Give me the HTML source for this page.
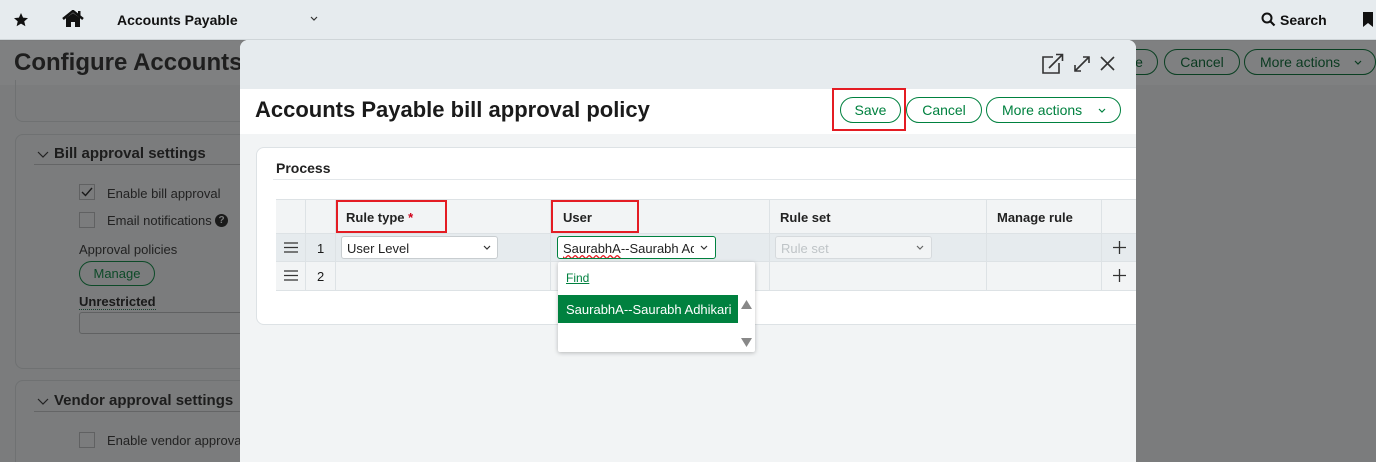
<!DOCTYPE html>
<html><head><meta charset="utf-8"><style>
*{box-sizing:border-box;margin:0;padding:0}
html,body{width:1376px;height:462px;overflow:hidden;background-color:rgb(123,124,125)}
body{position:relative;font-family:"Liberation Sans",sans-serif;color:#1a1a1a}
.abs{position:absolute}
.top{left:0;top:0;width:1376px;height:40px;background:#e6ebee;border-bottom:1px solid #cfd5d8}
.btn{position:absolute;height:26px;border:1.5px solid #00813f;border-radius:14px;color:#00813f;font-size:14px;display:flex;align-items:center;justify-content:center;background:#fff;white-space:nowrap}
.dbtn{position:absolute;height:26px;border:1.5px solid #0a3f22;border-radius:14px;color:#0a3a20;font-size:14px;display:flex;align-items:center;justify-content:center;white-space:nowrap}
.red{position:absolute;border:2px solid #e41c23}
.sel{position:absolute;height:23px;background:#fff;border:1px solid #c8cdd0;border-radius:3px;font-size:13px;padding:4px 5px;color:#222;white-space:nowrap}
.dk{color:#1d1d1d}
.chev{position:absolute}
</style></head><body>
<svg class="abs" style="left:0;top:0" width="1376" height="462"><rect x="0" y="0" width="1376" height="462" fill="#7b7c7d"/><rect x="0" y="41" width="1376" height="44" fill="#7f8081"/></svg>
<!-- top bar -->
<div class="abs top">
 <svg class="abs" style="left:13px;top:12px" width="16" height="16" viewBox="0 0 24 24"><path d="M12 1.5l3.1 7 7.4.6-5.6 4.9 1.7 7.3L12 17.4l-6.6 3.9 1.7-7.3L1.5 9.1l7.4-.6z" fill="#111"/></svg>
 <svg class="abs" style="left:62px;top:10px" width="22" height="18" viewBox="0 0 22 18"><path d="M1 9L11 1l10 8" stroke="#111" stroke-width="2.5" fill="none"/><path d="M4 8v9h5v-5h4v5h5V8L11 3z" fill="#111"/><rect x="16" y="1" width="2.5" height="5" fill="#111"/></svg>
 <div class="abs" style="left:117px;top:12px;font-size:14px;font-weight:bold;color:#111">Accounts Payable</div>
 <svg class="chev" style="left:310px;top:16px" width="8" height="5" viewBox="0 0 8 5"><path d="M1 1l3 3 3-3" stroke="#333" stroke-width="1.2" fill="none"/></svg>
 <svg class="abs" style="left:1261px;top:12px" width="15" height="15" viewBox="0 0 15 15"><circle cx="6" cy="6" r="4.5" stroke="#111" stroke-width="2" fill="none"/><path d="M9.5 9.5l4 4" stroke="#111" stroke-width="2.2"/></svg>
 <div class="abs" style="left:1280px;top:12px;font-size:14px;font-weight:bold;color:#111">Search</div>
 <svg class="abs" style="left:1363px;top:12px" width="10" height="15" viewBox="0 0 10 15"><path d="M0 0h10v15L5 11 0 15z" fill="#111"/></svg>
</div>
<div class="abs dk" style="left:14px;top:49px;font-size:24px;font-weight:bold;color:#1e1e1e;white-space:nowrap">Configure Accounts P</div>
<div class="dbtn" style="left:1120px;top:49px;width:38px">e</div>
<div class="dbtn" style="left:1164px;top:49px;width:76px">Cancel</div>
<div class="dbtn" style="left:1244px;top:49px;width:132px;justify-content:flex-start;padding-left:15px">More actions</div>
<svg class="chev" style="left:1354px;top:60px" width="8" height="5" viewBox="0 0 8 5"><path d="M1 1l3 3 3-3" stroke="#0a3a20" stroke-width="1.2" fill="none"/></svg>
<div class="abs" style="left:15px;top:80px;width:240px;height:42px;border:1px solid #6f7172;border-top:none;border-radius:0 0 8px 8px"></div>
<div class="abs" style="left:15px;top:134px;width:240px;height:235px;border:1px solid #6f7172;border-radius:8px"></div>
<svg class="chev" style="left:37px;top:151px" width="12" height="7" viewBox="0 0 12 7"><path d="M1 1l5 5 5-5" stroke="#222" stroke-width="1.2" fill="none"/></svg>
<div class="abs dk" style="left:54px;top:145px;font-size:15px;font-weight:bold">Bill approval settings</div>
<div class="abs" style="left:34px;top:164px;width:206px;height:1px;background:#646566"></div>
<div class="abs" style="left:79px;top:184px;width:16px;height:16px;border:1px solid #606162"></div>
<svg class="abs" style="left:81px;top:187px" width="12" height="10" viewBox="0 0 12 10"><path d="M1 5l3.5 3.5L11 1" stroke="#1a1a1a" stroke-width="1.4" fill="none"/></svg>
<div class="abs" style="left:107px;top:186px;font-size:13px;color:#222">Enable bill approval</div>
<div class="abs" style="left:79px;top:212px;width:16px;height:16px;border:1px solid #606162"></div>
<div class="abs" style="left:107px;top:213px;font-size:13px;color:#222">Email notifications</div>
<div class="abs" style="left:215px;top:214px;width:13px;height:13px;border-radius:50%;background:#1a1a1a;color:#7b7c7d;font-size:10px;font-weight:bold;text-align:center;line-height:13px">?</div>
<div class="abs" style="left:79px;top:242px;font-size:13px;color:#222">Approval policies</div>
<div class="dbtn" style="left:79px;top:261px;width:76px;height:25px;border-color:#0d4a28;font-size:13px;color:#0d4a28">Manage</div>
<div class="abs" style="left:79px;top:294px;font-size:13px;font-weight:bold;color:#1a1a1a;border-bottom:1px dotted #1a4030">Unrestricted</div>
<div class="abs" style="left:79px;top:312px;width:170px;height:22px;border:1px solid #606162;border-radius:3px"></div>
<div class="abs" style="left:15px;top:380px;width:240px;height:90px;border:1px solid #6f7172;border-radius:8px"></div>
<svg class="chev" style="left:37px;top:398px" width="12" height="7" viewBox="0 0 12 7"><path d="M1 1l5 5 5-5" stroke="#222" stroke-width="1.2" fill="none"/></svg>
<div class="abs dk" style="left:54px;top:392px;font-size:15px;font-weight:bold">Vendor approval settings</div>
<div class="abs" style="left:34px;top:411px;width:206px;height:1px;background:#646566"></div>
<div class="abs" style="left:79px;top:432px;width:16px;height:16px;border:1px solid #606162"></div>
<div class="abs" style="left:107px;top:433px;font-size:13px;color:#222;white-space:nowrap">Enable vendor approval</div>
<!-- modal -->
<div class="abs" style="left:240px;top:40px;width:896px;height:422px;background:#f2f4f5;border-radius:8px 8px 0 0;overflow:hidden">
 <div class="abs" style="left:0;top:0;width:896px;height:49px;background:#e6ebee"></div>
 <div class="abs" style="left:0;top:49px;width:896px;height:45px;background:#fff"></div>
 <div class="abs" style="left:16px;top:107px;width:900px;height:178px;background:#fff;border:1px solid #dde2e5;border-radius:8px"></div>
</div>
<svg class="abs" style="left:1041px;top:53px" width="24" height="22" viewBox="0 0 24 22"><path d="M12 4H2v16h16V10" stroke="#333" stroke-width="1.6" fill="none"/><path d="M8 15l13-13M15 1.5h6.5V8" stroke="#333" stroke-width="1.6" fill="none"/></svg>
<svg class="abs" style="left:1072px;top:54px" width="20" height="20" viewBox="0 0 20 20"><path d="M3 17L17 3M11 3h6v6M3 11v6h6" stroke="#333" stroke-width="1.6" fill="none"/></svg>
<svg class="abs" style="left:1100px;top:56px" width="15" height="15" viewBox="0 0 15 15"><path d="M1 1l13 13M14 1L1 14" stroke="#333" stroke-width="1.6"/></svg>
<div class="abs" style="left:255px;top:97px;font-size:22px;font-weight:bold;color:#1a1a1a;white-space:nowrap">Accounts Payable bill approval policy</div>
<div class="btn" style="left:840px;top:97px;width:61px">Save</div>
<div class="red" style="left:832px;top:88px;width:74px;height:43px"></div>
<div class="btn" style="left:906px;top:97px;width:76px">Cancel</div>
<div class="btn" style="left:986px;top:97px;width:135px;justify-content:flex-start;padding-left:15px">More actions</div>
<svg class="chev" style="left:1098px;top:108px" width="8" height="5" viewBox="0 0 8 5"><path d="M1 1l3 3 3-3" stroke="#00813f" stroke-width="1.2" fill="none"/></svg>
<!-- process -->
<div class="abs" style="left:276px;top:160px;font-size:14px;font-weight:bold;color:#222">Process</div>
<div class="abs" style="left:273px;top:179px;width:863px;height:1px;background:#e3e7ea"></div>
<div class="abs" style="left:276px;top:199px;width:860px;height:92px;background:#f2f4f5;border-top:1px solid #dde2e5;border-bottom:1px solid #dde2e5"></div>
<div class="abs" style="left:276px;top:233px;width:860px;height:29px;background:#e6ebee;border-top:1px solid #dde2e5;border-bottom:1px solid #dde2e5"></div>
<div class="abs" style="left:305px;top:199px;width:1px;height:92px;background:#dde2e5"></div>
<div class="abs" style="left:335px;top:199px;width:1px;height:92px;background:#dde2e5"></div>
<div class="abs" style="left:550px;top:199px;width:1px;height:92px;background:#dde2e5"></div>
<div class="abs" style="left:769px;top:199px;width:1px;height:92px;background:#dde2e5"></div>
<div class="abs" style="left:986px;top:199px;width:1px;height:92px;background:#dde2e5"></div>
<div class="abs" style="left:1101px;top:199px;width:1px;height:92px;background:#dde2e5"></div>
<div class="abs" style="left:346px;top:210px;font-size:13px;font-weight:bold;color:#222">Rule type <span style="color:#d0021b">*</span></div>
<div class="red" style="left:336px;top:200px;width:111px;height:33px"></div>
<div class="abs" style="left:563px;top:210px;font-size:13px;font-weight:bold;color:#222">User</div>
<div class="red" style="left:551px;top:200px;width:88px;height:33px"></div>
<div class="abs" style="left:780px;top:210px;font-size:13px;font-weight:bold;color:#222">Rule set</div>
<div class="abs" style="left:997px;top:210px;font-size:13px;font-weight:bold;color:#222">Manage rule</div>
<svg class="abs" style="left:284px;top:242px" width="14" height="11" viewBox="0 0 14 11"><path d="M0 1h14M0 5.5h14M0 10h14" stroke="#333" stroke-width="1.3"/></svg>
<div class="abs" style="left:317px;top:241px;font-size:13px">1</div>
<svg class="abs" style="left:284px;top:270px" width="14" height="11" viewBox="0 0 14 11"><path d="M0 1h14M0 5.5h14M0 10h14" stroke="#333" stroke-width="1.3"/></svg>
<div class="abs" style="left:317px;top:269px;font-size:13px">2</div>
<div class="sel" style="left:341px;top:236px;width:157px">User Level</div>
<svg class="chev" style="left:483px;top:245px" width="8" height="5" viewBox="0 0 8 5"><path d="M1 1l3 3 3-3" stroke="#333" stroke-width="1.2" fill="none"/></svg>
<div class="sel" style="left:557px;top:236px;width:159px;border-color:#00813f;overflow:hidden"><span style="text-decoration:underline wavy #e41c23">SaurabhA</span>--Saurabh Ad</div>
<div class="abs" style="left:694px;top:238px;width:20px;height:19px;background:#fff"></div>
<svg class="chev" style="left:700px;top:245px" width="8" height="5" viewBox="0 0 8 5"><path d="M1 1l3 3 3-3" stroke="#333" stroke-width="1.2" fill="none"/></svg>
<div class="sel" style="left:775px;top:236px;width:157px;background:#f2f4f5;color:#bfc4c7;border-color:#d6dadd">Rule set</div>
<svg class="chev" style="left:916px;top:245px" width="8" height="5" viewBox="0 0 8 5"><path d="M1 1l3 3 3-3" stroke="#666" stroke-width="1.2" fill="none"/></svg>
<svg class="abs" style="left:1113px;top:241px" width="13" height="13" viewBox="0 0 13 13"><path d="M6.5 0v13M0 6.5h13" stroke="#333" stroke-width="1.3"/></svg>
<svg class="abs" style="left:1113px;top:269px" width="13" height="13" viewBox="0 0 13 13"><path d="M6.5 0v13M0 6.5h13" stroke="#333" stroke-width="1.3"/></svg>
<!-- dropdown -->
<div class="abs" style="left:558px;top:262px;width:197px;height:90px;background:#fff;box-shadow:0 1px 4px rgba(0,0,0,.25);border-radius:2px"></div>
<div class="abs" style="left:566px;top:271px;font-size:12px;color:#00813f;text-decoration:underline">Find</div>
<div class="abs" style="left:558px;top:295px;width:180px;height:28px;background:#00813f;color:#fff;font-size:13px;padding:7px 8px;white-space:nowrap">SaurabhA--Saurabh Adhikari</div>
<svg class="abs" style="left:741px;top:300px" width="11" height="9" viewBox="0 0 11 9"><path d="M0 9L5.5 0 11 9z" fill="#888"/></svg>
<svg class="abs" style="left:741px;top:338px" width="11" height="9" viewBox="0 0 11 9"><path d="M0 0h11L5.5 9z" fill="#888"/></svg>
</body></html>
